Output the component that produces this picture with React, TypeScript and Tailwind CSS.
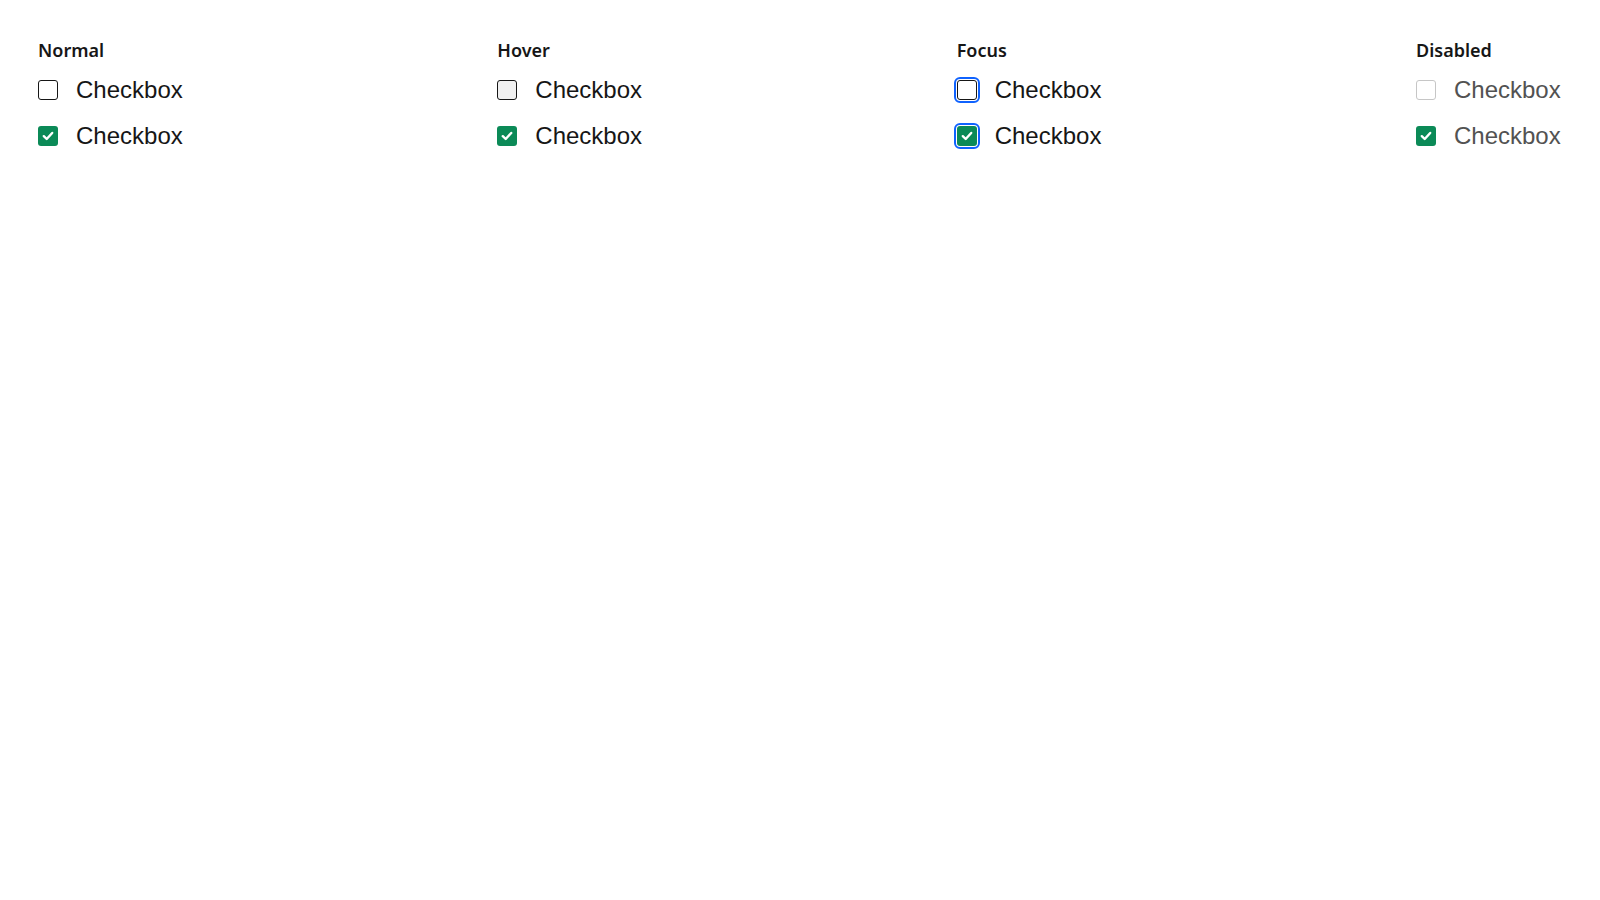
import React from "react";

type BoxProps = { checked?: boolean; state: "normal" | "hover" | "focus" | "disabled" };

function Box({ checked, state }: BoxProps) {
  let cls = "w-5 h-5 rounded-[3px] flex items-center justify-center shrink-0 ";
  if (checked) {
    cls += "bg-[#0b8a57] ";
  } else if (state === "hover") {
    cls += "bg-[#f0f0f0] border border-[#161616] ";
  } else if (state === "disabled") {
    cls += "bg-white border border-[#c6c6c6] ";
  } else {
    cls += "bg-white border border-[#161616] ";
  }
  if (state === "focus") {
    cls += "outline-2 outline-solid outline-[#0f62fe] outline-offset-1 ";
  }
  return (
    <div className={cls}>
      {checked && (
        <svg width="12" height="10" viewBox="0 0 12 10" fill="none">
          <path d="M1.8 5.2L4.7 8L10.2 2" stroke="white" strokeWidth="2.4" strokeLinecap="round" strokeLinejoin="round" />
        </svg>
      )}
    </div>
  );
}

function Column({ title, state }: { title: string; state: BoxProps["state"] }) {
  const textColor = state === "disabled" ? "text-[#525252]" : "text-[#161616]";
  return (
    <div className="w-[459.33px] shrink-0 flex flex-col">
      <div
        className="text-[18px] leading-[24px] font-semibold text-[#161616]"
        style={{ fontFamily: '"Noto Sans", "Liberation Sans", sans-serif' }}
      >
        {title}
      </div>
      <div className="mt-[14px] flex flex-col gap-[18px]">
        {[false, true].map((c) => (
          <div key={String(c)} className="h-7 flex items-center gap-[18px]">
            <Box checked={c} state={state} />
            <span className={"text-[24px] leading-[28px] " + textColor}>Checkbox</span>
          </div>
        ))}
      </div>
    </div>
  );
}

export default function App() {
  return (
    <div
      className="w-[1600px] h-[900px] overflow-hidden bg-white"
      style={{ fontFamily: '"Liberation Sans", Arial, sans-serif' }}
    >
      <div className="flex pl-[38px] pt-[38px]">
        <Column title="Normal" state="normal" />
        <Column title="Hover" state="hover" />
        <Column title="Focus" state="focus" />
        <Column title="Disabled" state="disabled" />
      </div>
    </div>
  );
}
